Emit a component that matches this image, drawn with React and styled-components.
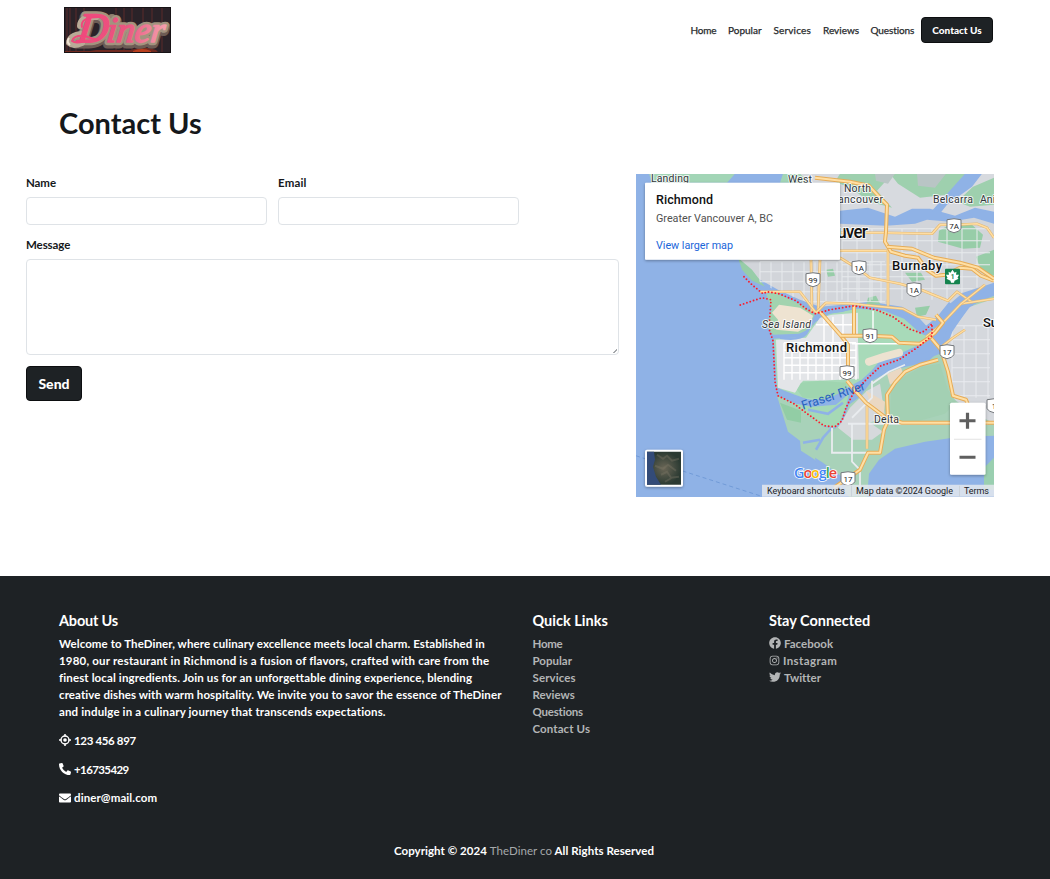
import React from 'react';
import styled, { createGlobalStyle } from 'styled-components';
import { FaPhoneAlt, FaEnvelope, FaFacebook, FaTwitter } from 'react-icons/fa';
import { FaInstagram } from 'react-icons/fa6';

const ink = '#1e2225';

const GlobalStyle = createGlobalStyle`
  * { box-sizing: border-box; }
  body { margin: 0; background: #fff; color: #15181b; font-family: Lato, "Open Sans", sans-serif; font-weight: 700; font-variant-ligatures: none; }
  a { text-decoration: none; color: inherit; }
`;

const Page = styled.div`
  height: 879px;
  display: flex;
  flex-direction: column;
  overflow: hidden;
`;
const Header = styled.header`
  height: 60px;
  padding: 0 57px 0 64px;
  display: flex;
  align-items: center;
  justify-content: space-between;
`;
const Logo = styled.svg`
  width: 107px;
  height: 46px;
  display: block;
`;
const Nav = styled.nav`
  display: flex;
  align-items: center;
  font-size: 10px;
  font-weight: 400;
  color: #26292b;
`;
const NavLink = styled.a`
  width: ${p => p.$w}px;
  white-space: nowrap;
  letter-spacing: ${p => p.$ls || 0}px;
  -webkit-text-stroke: 0.25px #26292b;
`;
const NavButton = styled.a`
  width: 72px;
  height: 26px;
  border-radius: 4px;
  background: ${ink};
  border: 1px solid #0c0e10;
  color: #fff;
  font-weight: 900;
  display: flex;
  align-items: center;
  justify-content: center;
`;
const Title = styled.h1`
  margin: 44px 0 0 59px;
  height: 70px;
  font-size: 29px;
  line-height: 37px;
  font-weight: 700;
`;
const Main = styled.main`
  height: 402px;
  padding: 0 56px 0 26px;
  display: flex;
  justify-content: space-between;
`;
const Form = styled.form`
  width: 593px;
  display: flex;
  flex-direction: column;
  align-items: flex-start;
`;
const Row = styled.div`
  display: flex;
  gap: 11.5px;
  margin-bottom: 11px;
`;
const Field = styled.label`
  display: flex;
  flex-direction: column;
  font-size: 11.5px;
  line-height: 17px;
  gap: 6px;
  letter-spacing: ${p => p.$ls || 0}px;
`;
const Input = styled.input`
  width: 240.5px;
  height: 28px;
  border: 1px solid #dfe3e7;
  border-radius: 4px;
  outline: none;
`;
const TextArea = styled.textarea`
  width: 593px;
  height: 96px;
  border: 1px solid #dfe3e7;
  border-radius: 4px;
  outline: none;
  display: block;
  resize: none;
  background: linear-gradient(135deg, transparent 50%, #a5a8ab 50%, #a5a8ab 70%, transparent 70%) right 1px bottom 1px / 4px 4px no-repeat;
`;
const SendButton = styled.button`
  margin-top: 11px;
  width: 56px;
  height: 35px;
  padding: 0;
  border-radius: 4px;
  border: 1px solid #0c0e10;
  background: ${ink};
  color: #fff;
  font: 900 14px Lato, sans-serif;
`;
const MapFrame = styled.div`
  width: 358px;
  height: 323px;
`;
const MapSvg = styled.svg`
  display: block;
  font-family: Roboto, sans-serif;
  font-weight: 400;
`;
const Footer = styled.footer`
  flex: 1;
  background: ${ink};
  color: #fff;
  padding: 35px 59px 0;
  font-size: 11.5px;
`;
const Columns = styled.div`
  display: grid;
  grid-template-columns: 473.5px 236.5px 1fr;
  height: 230px;
`;
const Heading = styled.h2`
  margin: 0 0 4.5px;
  font-size: 14.5px;
  line-height: 19px;
  letter-spacing: ${p => p.$ls || 0}px;
`;
const Line = styled.div`
  height: 17.2px;
  line-height: 17.2px;
  white-space: nowrap;
  letter-spacing: ${p => p.$ls || 0}px;
`;
const FooterLink = styled.a`
  height: 17.2px;
  line-height: 17.2px;
  display: flex;
  align-items: center;
  gap: 3px;
  color: #b3b5b6;
  letter-spacing: ${p => p.$ls || 0}px;
`;
const ContactLine = styled.div`
  margin-top: 11.4px;
  height: 17.2px;
  display: flex;
  align-items: center;
  gap: 3px;
  letter-spacing: ${p => p.$ls || 0}px;
`;
const Copyright = styled.div`
  text-align: center;
  line-height: 20px;
  padding-right: 2px;
  letter-spacing: 0.05px;
`;
const Muted = styled.span`
  color: #a5a8aa;
  font-weight: 400;
`;

function DinerLogo() {
  const sign = {
    y: 35, fontFamily: '"Liberation Serif", serif', fontStyle: 'italic', fontWeight: 400,
    transform: 'skewX(-7)',
  };
  const letters = (
    <>
      <tspan x="17" fontSize="42" textLength="29">D</tspan>
      <tspan x="46" fontSize="36" textLength="58">iner</tspan>
    </>
  );
  return (
    <Logo viewBox="0 0 107 46">
      <defs>
        <linearGradient id="neon" x1="0" x2="1">
          <stop offset="0" stopColor="#f0487c" />
          <stop offset=".55" stopColor="#ea5580" />
          <stop offset="1" stopColor="#f4a0ae" />
        </linearGradient>
      </defs>
      <rect width="107" height="46" fill="#2a2228" />
      {[2, 5, 11, 19, 51, 59, 67, 78, 87, 97].map(x => (
        <rect key={x} x={x} width="2" height="46" fill="#592a2a" opacity=".5" />
      ))}
      <path d="M0 44h26l6-1h35q12-5 25 0l3 3H0z" fill="#712a20" />
      <path d="M69 44q9-4 18 0v2H69z" fill="#ba401e" />
      <circle cx="48" cy="12" r="5" fill="#91806f" />
      <g strokeLinejoin="round" strokeLinecap="round">
        <text {...sign} y="37" fill="#6d5c55" stroke="#6d5c55" strokeWidth="9">{letters}</text>
        <text {...sign} fill="#a2937f" stroke="#a2937f" strokeWidth="6.5">{letters}</text>
        <path d="M18 36q-9 4-13 0q1-8 12-9M16 19q0-10 16-9" fill="none" stroke="#b9aa97" strokeWidth="6" />
        <text {...sign} fill="url(#neon)" stroke="url(#neon)" strokeWidth="1.6">{letters}</text>
        <path d="M20 34q-8 3-12 0q2-6 13-5q8 3 13 4M18 20q-2-10 17-10" fill="none" stroke="#f0487c" strokeWidth="2" />
      </g>
      <path d="M6 38q-4-3-1-7" fill="none" stroke="#eee2d3" strokeWidth="2" />
      <rect x=".5" y=".5" width="106" height="45" fill="none" stroke="#171316" />
    </Logo>
  );
}

const roadsMajor = [
  'M815 178L850 182L869 186L881 199L887 205L886 232L885 242L891 252L905 256L918 258L927 270L936 276L946 275L960 268L972 269L981 276L994 281',
  'M887 247L912 249L934 258L960 263L978 268L994 279',
  'M936 315L943 323L935 333L930 337L941 350L948 372L953 396L966 400L972 415',
  'M847 381L856 392L866 403L886 418L902 423L994 423',
  'M820 312L841 336L848 345L848 380M854 306V336',
  'M834 488L860 470L868 453L880 453L884 430L888 421L887 395L895 383L905 372L920 365L938 360',
  'M841 336L870 336L892 337L899 343L920 344L932 336',
];
const roads = [
  'M840 233L885 233L932 234L940 225L957 225L977 224L987 228L994 238',
  'M840 251L887 251',
  'M811 260L812 313M820 260L818 313', 'M888 250L888 306',
  'M760 292L800 292L816 313L826 303L852 304L872 306L903 309L918 317L936 320',
  'M840 258L858 269L870 278L900 284L921 290L948 301L957 292L973 303',
  'M926 337L940 326L961 304L994 299', 'M961 304L985 285',
  'M867 406L867 449', 'M940 348L953 338L965 330',
];
const shields = [
  [813, 280, '99'], [859, 268, '1A'], [914, 290, '1A'], [954, 226, '7A'],
  [870, 336, '91'], [847, 373, '99'], [947, 352, '17'], [848, 479, '17'], [994, 406, '1'],
];

function grid(x1, x2, y1, y2, dx, dy) {
  let d = '';
  for (let x = x1; x <= x2; x += dx) d += `M${x} ${y1}V${y2}`;
  for (let y = y1; y <= y2; y += dy) d += `M${x1} ${y}H${x2}`;
  return d;
}

function AreaMap() {
  return (
    <MapSvg width="358" height="323" viewBox="636 174.5 358 322.5">
      <defs>
        <clipPath id="land">
          <path d="M738 258L746 272L765 286L780 292L800 300L820 306L842 305L870 302L900 307L918 317L930 328L943 310L963 292L994 283V170H735z" />
        </clipPath>
        <filter id="cardShadow" x="-10%" y="-10%" width="120%" height="130%">
          <feDropShadow dx="0" dy="1" stdDeviation="1.5" floodOpacity=".35" />
        </filter>
        <radialGradient id="terrain"><stop stopColor="#6a6656" /><stop offset="1" stopColor="#2b3a32" /></radialGradient>
      </defs>
      <rect x="636" y="174" width="358" height="324" fill="#8fb2e6" />
      <path d="M649 174h86l-8 9h-75zM783 174h60v9h-63z" fill="#a2d5b6" />
      <path d="M800 174H994V212L975 208L955 216L930 209L912 209L895 217L868 208L840 211z" fill="#d7dadf" />
      <path d="M840 174H886V181L877 191L892 208L870 202L850 188L835 182zM890 174H970L958 187L947 195L920 198L898 184zM994 178L973 187L957 202L970 207L994 205z" fill="#9ed0ae" />
      <path d="M875 174H895L888 184L876 181zM917 174H946L935 188L918 186z" fill="#b9c5c5" />
      <path d="M965 174H982L972 187L947 205L939 215L932 211L948 193z" fill="#8fb2e6" />
      <path d="M738 258L746 272L762 281L778 290L800 300L820 307L842 305L870 302L902 307L918 317L929 329L944 309L963 293L994 283V224L974 218L950 222L927 220L915 224L886 226L840 224V258z" fill="#d2d5da" />
      <path d="M738 258L752 270L765 287L752 281L742 270zM939 231L955 222L972 225L983 235L980 248L963 249L938 242zM976 257L994 250V276L982 273zM868 298L876 296L881 306H866zM826 270L833 269L835 276L828 277zM905 273H921L925 280L912 282zM915 308L930 306L926 315L917 317z" fill="#97cda8" />
      <path clipPath="url(#land)" d={grid(760, 885, 262, 303, 11, 10) + grid(842, 990, 229, 300, 15, 12)} fill="none" stroke="#e7eaed" strokeWidth="1" />
      <path d="M766 294L776 293L803 306L816 316L812 328L799 334L773 335L766 326L772 309z" fill="#a2d3af" />
      <path d="M779 305L800 308L813 316L810 325L798 332L776 330L778 320L772 313z" fill="#eee3d1" />
      <path d="M774 339L804 337L816 322L830 314L858 309L884 311L904 319L921 334L932 338L915 347L893 357L879 362L866 378L850 392L836 397L812 401L795 395L777 388z" fill="#a8dab9" />
      <path d="M776 340L806 338L820 318L832 315L858 313V340L859 379L820 381H803L795 393L778 388z" fill="#e3e5e8" />
      <path d={grid(784, 856, 343, 380, 8, 7.5) + 'M816 325H852M824 318V343M833 317V343M843 315V343M852 344H920M873 311V336'} stroke="#fff" strokeWidth="1.4" fill="none" />
      <path d="M801 383L820 381L846 383L847 393L826 399L803 398L797 390z" fill="#9fd5b0" />
      <path d="M869 362L884 357L899 353" stroke="#ede2d0" strokeWidth="8" strokeLinecap="round" fill="none" />
      <path d="M786 399L796 404L812 407L836 405L849 394L846 407L840 423L834 428L823 426L807 415z" fill="#a5d9b5" />
      <path d="M777 396L786 399L796 406L814 418L824 427L835 429L843 422L849 405L860 397L872 381L893 370L928 362L942 348L958 328L974 304L994 296V436L960 437L925 442L895 449L879 460L869 474L867 498H850L842 489L828 474L815 460L801 451L800 441L788 432z" fill="#a8d2b9" />
      <path d="M780 403L801 411V423L787 420z" fill="#92cda5" />
      <path d="M939 348L952 331L970 307L994 299V423L973 414L951 397L948 366z" fill="#d5d8dd" />
      <path d={grid(952, 990, 326, 398, 12, 14)} stroke="#e9ebef" fill="none" />
      <path d="M850 408L867 391L880 384L885 417L870 423L883 432L872 440L853 440L838 428z" fill="#d6d9dc" />
      <path d="M866 391L885 402L884 414L872 409zM887 374L901 368L904 376L890 385z" fill="#ead8c3" />
      <path d="M890 420L891 391L902 378L922 367L940 364L948 390L956 402L945 414L916 422z" fill="#a3d0b3" />
      <path d="M777 391Q792 402 812 403T846 392L864 382L877 370L900 361L927 356L942 350L950 330L966 306L994 290" fill="none" stroke="#8fb2e6" strokeWidth="6" strokeLinejoin="round" />
      <path d="M780 338Q800 341 806 334L817 314L842 311L854 307L879 306L906 315L922 331L938 318L950 303M832 428L823 438L816 450M808 410L828 414L843 403M803 443L820 440" fill="none" stroke="#8fb2e6" strokeWidth="2.6" />
      <path d="M832 428V453H869M852 423V462L860 470V490M848 424H988M872 381L872 398L852 418M905 365L889 372L872 384" fill="none" stroke="#e9ecef" strokeWidth="1.8" />
      <path d="M815 458L823 463L842 477L846 489L840 498H822z" fill="#8fb2e6" />
      <path d="M994 458L984 468V490H994z" fill="#9acfb0" />
      {roads.map(d => <g key={d} fill="none" strokeLinejoin="round"><path d={d} stroke="#e5b870" strokeWidth="2.7" /><path d={d} stroke="#ffdda1" strokeWidth="1.4" /></g>)}
      {roadsMajor.map(d => <g key={d} fill="none" strokeLinejoin="round"><path d={d} stroke="#e6ac57" strokeWidth="4" /><path d={d} stroke="#ffdfa4" strokeWidth="2" /></g>)}
      <path d="M744 277L752 285L763 294L767 292L779 294L796 301L806 309L815 314L830 310L854 306L876 310L893 317L909 329L920 333L925 331L932 324L932 336L917 348L899 360L881 366L867 379L853 394L846 408L842 421L835 427L824 426L810 416L794 404L778 396L775 382L773 341L769 329L771 300L762 298L738 306" fill="none" stroke="#fa1c2c" strokeWidth="1.9" strokeLinecap="round" strokeDasharray="0 3.5" />
      <path d="M636 456L685 472L760 496" fill="none" stroke="#719bd8" strokeDasharray="4 3" />
      <g fill="#33373b" fontSize="10.5" stroke="#fff" strokeOpacity=".8" strokeWidth="2" paintOrder="stroke" strokeLinejoin="round">
        <text x="651" y="182" textLength="38">Landing</text><text x="788" y="183.500" textLength="24">West</text>
        <text x="844" y="192" textLength="27">North</text><text x="838" y="203" textLength="45">ancouver</text>
        <text x="933" y="203" textLength="40">Belcarra</text><text x="980" y="203">Ani</text>
        <text x="874" y="423" textLength="25">Delta</text>
        <text x="762" y="328" textLength="49" fontStyle="italic">Sea Island</text>
      </g>
      <g fill="#111" fontWeight="500" stroke="#fff" strokeOpacity=".8" strokeWidth="2" paintOrder="stroke">
        <text x="837" y="238" fontSize="17.500" textLength="31">uver</text>
        <text x="892" y="270" fontSize="13" textLength="50">Burnaby</text>
        <text x="786" y="352" fontSize="13" textLength="61">Richmond</text>
        <text x="983" y="327.500" fontSize="13">Su</text>
      </g>
      <text x="803" y="410" transform="rotate(-18 803 410)" fontSize="12.500" textLength="66" fill="#2861bd">Fraser River</text>
      {shields.map(([x, y, n]) => (
        <g key={`${x}-${y}`}>
          <path d={`M${x - 7} ${y - 6}q7-2 14 0v9q-2 3-7 4q-5-1-7-4z`} fill="#fff" stroke="#73777b" />
          <text x={x} y={y + 3.2} fontSize="8" textAnchor="middle" fill="#222">{n}</text>
        </g>
      ))}
      <rect x="945" y="269" width="15" height="15.500" rx="1" fill="#14834e" />
      <path d="M952.500 270l2 3 2-1-.5 3 3 0-1.5 3 1 1-4 2-.5 2h-3l-.5-2-4-2 1-1-1.500-3 3 0-.5-3 2 1z" fill="#fff" />
      <text x="952.500" y="279.500" fontSize="6.500" fontWeight="700" textAnchor="middle" fill="#14834e">1</text>
      <rect x="645" y="183" width="195" height="77" rx="1" fill="#fff" filter="url(#cardShadow)" />
      <text x="656" y="204" fontSize="12.500" fontWeight="500" textLength="57" fill="#111">Richmond</text>
      <text x="656" y="222.500" fontSize="10.800" textLength="117" fill="#505050">Greater Vancouver A, BC</text>
      <text x="656" y="248.800" fontSize="10.800" textLength="77" fill="#1a66d9">View larger map</text>
      <rect x="645" y="450" width="38" height="37" rx="2" fill="#fff" filter="url(#cardShadow)" />
      <rect x="647" y="452" width="34" height="33" fill="url(#terrain)" />
      <path d="M647 452h7l1 8-2 7 3 10 5 8h-14z" fill="#334b78" />
      <path d="M657 455l6 4 4-3 5 5 7-2M655 466l8 3 5-4 8 6M661 475l6-3 4 6 8-1M665 482l7-4" stroke="#817c69" strokeWidth="2" opacity=".35" fill="none" />
      <text x="794" y="478" fontFamily='"Open Sans", sans-serif' fontSize="14.500" textLength="43" fontWeight="600" stroke="#fff" strokeWidth="1.500" paintOrder="stroke">
        <tspan fill="#4285f4">G</tspan><tspan fill="#ea4335">o</tspan><tspan fill="#fbbc04">o</tspan><tspan fill="#4285f4">g</tspan><tspan fill="#34a853">l</tspan><tspan fill="#ea4335">e</tspan>
      </text>
      <rect x="950" y="403" width="35.500" height="72" rx="1.500" fill="#fff" filter="url(#cardShadow)" />
      <path d="M954 439.500H981.500" stroke="#e2e2e2" />
      <path d="M959.500 421H975.500M967.500 413V429M959.500 457.500H975.500" stroke="#5f5f5f" strokeWidth="3.200" />
      <rect x="762" y="485" width="232" height="12" fill="#e4e8ed" opacity=".85" />
      <path d="M851.500 486V497M959.500 486V497" stroke="#cbd2da" />
      <g fontSize="9" fill="#202124">
        <text x="767" y="494.500" textLength="78">Keyboard shortcuts</text>
        <text x="856" y="494.500" textLength="97">Map data ©2024 Google</text>
        <text x="964" y="494.500" textLength="25">Terms</text>
      </g>
    </MapSvg>
  );
}

function TargetIcon() {
  return (
    <svg width="12" height="12" viewBox="0 0 12 12">
      <circle cx="6" cy="6" r="4" fill="none" stroke="#fff" strokeWidth="1.400" />
      <circle cx="6" cy="6" r="1.800" fill="#fff" />
      <path d="M6 0V2.500M6 9.500V12M0 6H2.500M9.500 6H12" stroke="#fff" strokeWidth="1.500" />
    </svg>
  );
}

const about = [
  ['Welcome to TheDiner, where culinary excellence meets local charm. Established in', 0.085],
  ['1980, our restaurant in Richmond is a fusion of flavors, crafted with care from the', 0.19],
  ['finest local ingredients. Join us for an unforgettable dining experience, blending', 0.12],
  ['creative dishes with warm hospitality. We invite you to savor the essence of TheDiner', 0.09],
  ['and indulge in a culinary journey that transcends expectations.', 0.15],
];

export default function App() {
  return (
    <Page>
      <GlobalStyle />
      <Header>
        <DinerLogo />
        <Nav>
          <NavLink $w={37.5} $ls={-0.2}>Home</NavLink>
          <NavLink $w={45.5}>Popular</NavLink>
          <NavLink $w={49.5} $ls={0.15}>Services</NavLink>
          <NavLink $w={47.5}>Reviews</NavLink>
          <NavLink $w={50.5} $ls={-0.1}>Questions</NavLink>
          <NavButton>Contact Us</NavButton>
        </Nav>
      </Header>
      <Title>Contact Us</Title>
      <Main>
        <Form>
          <Row>
            <Field $ls={-0.1}>Name<Input /></Field>
            <Field $ls={0.15}>Email<Input /></Field>
          </Row>
          <Field $ls={-0.1}>Message<TextArea /></Field>
          <SendButton type="button">Send</SendButton>
        </Form>
        <MapFrame><AreaMap /></MapFrame>
      </Main>
      <Footer>
        <Columns>
          <section>
            <Heading $ls={-0.2}>About Us</Heading>
            {about.map(([t, ls]) => <Line key={t} $ls={ls}>{t}</Line>)}
            <ContactLine $ls={-0.35}><TargetIcon />123 456 897</ContactLine>
            <ContactLine $ls={-0.6}><FaPhoneAlt size={12} />+16735429</ContactLine>
            <ContactLine $ls={0.1}><FaEnvelope size={12} />diner@mail.com</ContactLine>
          </section>
          <section>
            <Heading>Quick Links</Heading>
            <FooterLink $ls={-0.3}>Home</FooterLink>
            <FooterLink>Popular</FooterLink>
            <FooterLink $ls={0.1}>Services</FooterLink>
            <FooterLink>Reviews</FooterLink>
            <FooterLink $ls={-0.2}>Questions</FooterLink>
            <FooterLink $ls={0.1}>Contact Us</FooterLink>
          </section>
          <section>
            <Heading>Stay Connected</Heading>
            <FooterLink><FaFacebook size={12} />Facebook</FooterLink>
            <FooterLink $ls={0.4}><FaInstagram size={11} />Instagram</FooterLink>
            <FooterLink><FaTwitter size={12} />Twitter</FooterLink>
          </section>
        </Columns>
        <Copyright>Copyright © 2024 <Muted>TheDiner co</Muted> All Rights Reserved</Copyright>
      </Footer>
    </Page>
  );
}
